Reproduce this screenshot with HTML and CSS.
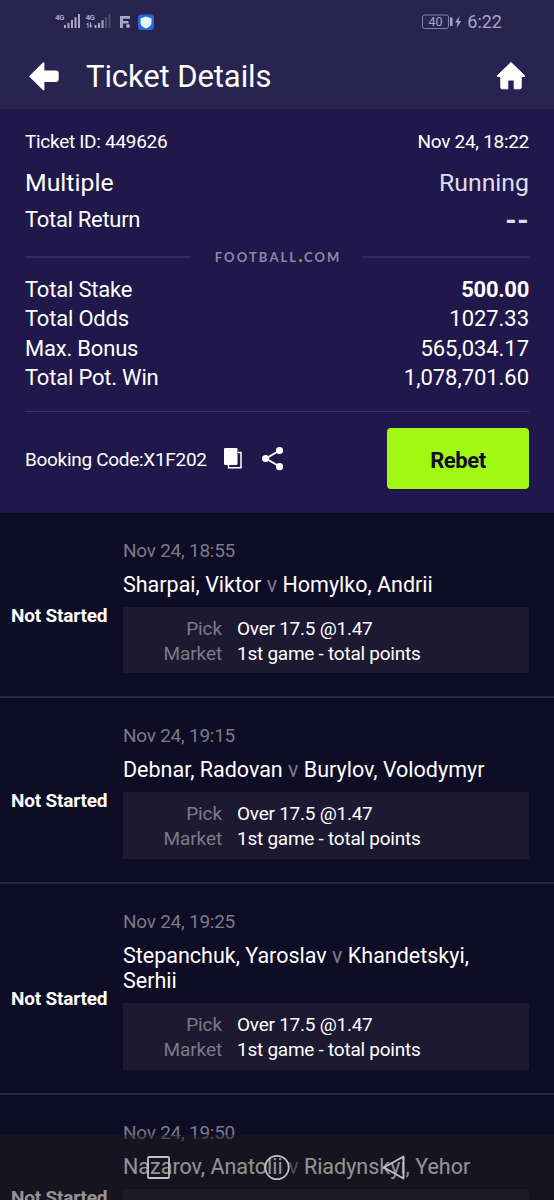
FILE: index.html
```
<!DOCTYPE html>
<html lang="en">
<head>
<meta charset="utf-8">
<title>Ticket Details</title>
<link rel="stylesheet" href="styles.css">
</head>
<body>
<div class="screen">
  <header class="header">
    <div class="status-bar">
      <svg class="status-icons" width="102" height="20" viewBox="0 0 102 20">
        <g fill="#a9a5c4">
          <rect x="9" y="14" width="2" height="3"/><rect x="12.500" y="12" width="2" height="5"/><rect x="16" y="9" width="2" height="8"/><rect x="19.500" y="6" width="2" height="11"/><rect x="23" y="3" width="2" height="14"/>
          <rect x="39.500" y="14" width="2" height="3"/><rect x="43" y="12" width="2" height="5"/><rect x="46.500" y="9" width="2" height="8"/>
          <g opacity=".3"><rect x="50" y="6" width="2" height="11"/><rect x="53.500" y="3" width="2" height="14"/></g>
          <path d="M32.500 17v-3.500h-1.500l2.500-2.500V17zM35 11.500v3h-1l1.700 2.500 1.800-2.500h-1.300v-3z"/>
          <path d="M65 5h10v2.800h-7V10h5.500v2.600H68V17h-3z"/><circle cx="73" cy="15" r="2"/>
          <text x="0" y="8.500" class="network">4G</text><text x="30.500" y="8.500" class="network">4G</text>
        </g>
        <rect x="83" y="3.500" width="16" height="15.500" rx="3.500" fill="#2568df"/>
        <path d="M91 5.500l5.500 2v4c0 3-2.500 4.800-5.500 6-3-1.200-5.500-3-5.500-6v-4z" fill="#e9f6fb"/>
      </svg>
      <div class="status-right">
        <svg width="42" height="18" viewBox="0 0 42 18">
          <rect x="1.500" y="2" width="26" height="13.500" rx="2" fill="none" stroke="#8783a6"/>
          <rect x="29" y="4.500" width="2.500" height="8.500" fill="#a9a5c4"/>
          <path d="M38.500 3l-4.500 6.500h2.600l-1 5.500 4.600-7h-2.700z" fill="#a9a5c4"/>
          <text x="14.500" y="13" text-anchor="middle" class="battery">40</text>
        </svg>
        <span class="clock">6:22</span>
      </div>
    </div>
    <div class="title-bar">
      <svg class="back" width="32" height="32" viewBox="0 0 32 32"><path d="M2.300 16.300L15.500 3.200v8.300h12.500a1.800 1.800 0 0 1 1.800 1.800v6a1.800 1.800 0 0 1-1.800 1.800H15.500v8.300z" fill="#fff" stroke="#fff" stroke-width="1.800" stroke-linejoin="round"/></svg>
      <h1 class="title">Ticket Details</h1>
      <svg class="home" width="30" height="30" viewBox="0 0 30 30"><path d="M15 1.500L1.500 14.500v1h3.300v11a1.300 1.300 0 0 0 1.300 1.300h5.700V20a1 1 0 0 1 1-1h4.400a1 1 0 0 1 1 1v7.800h5.700a1.300 1.300 0 0 0 1.300-1.300v-11h3.300v-1z" fill="#fff" stroke="#fff" stroke-linejoin="round"/></svg>
    </div>
  </header>

  <section class="summary">
    <div class="line line-id"><span>Ticket ID: 449626</span><span>Nov 24, 18:22</span></div>
    <div class="line line-type"><span>Multiple</span><span class="running">Running</span></div>
    <div class="line line-return"><span>Total Return</span><span class="dashes">--</span></div>
    <div class="brand"><span class="brand-name">FOOTBALL<span class="dot">.</span>COM</span></div>
    <div class="totals">
      <div class="line"><span>Total Stake</span><span class="stake">500.00</span></div>
      <div class="line"><span>Total Odds</span><span class="value">1027.33</span></div>
      <div class="line"><span>Max. Bonus</span><span class="value">565,034.17</span></div>
      <div class="line"><span>Total Pot. Win</span><span class="value">1,078,701.60</span></div>
    </div>
    <div class="booking">
      <span class="code">Booking Code:X1F202</span>
      <svg class="copy" width="20" height="24" viewBox="0 0 20 24"><path d="M5.500 18v2.800h12.500V5.500h-3" fill="none" stroke="#fff" stroke-width="1.500"/><rect x="1" y="1" width="13.500" height="17" rx="1.300" fill="#fff"/></svg>
      <svg class="share" width="24" height="26" viewBox="0 0 24 26"><path d="M18.500 4.500L5 12.500l13.500 8" fill="none" stroke="#fff" stroke-width="2"/><g fill="#fff"><circle cx="18.500" cy="4.500" r="3.600"/><circle cx="4.600" cy="12.500" r="3.600"/><circle cx="18.500" cy="20.700" r="3.600"/></g></svg>
      <button class="rebet">Rebet</button>
    </div>
  </section>

  <main class="games">
    <article class="game">
      <div class="state">Not Started</div>
      <div class="details">
        <div class="date">Nov 24, 18:55</div>
        <div class="players">Sharpai, Viktor <span class="versus">v</span> Homylko, Andrii</div>
        <dl class="bet"><dt>Pick</dt><dd>Over 17.5 @1.47</dd><dt>Market</dt><dd>1st game - total points</dd></dl>
      </div>
    </article>
    <article class="game">
      <div class="state">Not Started</div>
      <div class="details">
        <div class="date">Nov 24, 19:15</div>
        <div class="players">Debnar, Radovan <span class="versus">v</span> Burylov, Volodymyr</div>
        <dl class="bet"><dt>Pick</dt><dd>Over 17.5 @1.47</dd><dt>Market</dt><dd>1st game - total points</dd></dl>
      </div>
    </article>
    <article class="game">
      <div class="state">Not Started</div>
      <div class="details">
        <div class="date">Nov 24, 19:25</div>
        <div class="players">Stepanchuk, Yaroslav <span class="versus">v</span> Khandetskyi, Serhii</div>
        <dl class="bet"><dt>Pick</dt><dd>Over 17.5 @1.47</dd><dt>Market</dt><dd>1st game - total points</dd></dl>
      </div>
    </article>
    <article class="game">
      <div class="state">Not Started</div>
      <div class="details">
        <div class="date">Nov 24, 19:50</div>
        <div class="players">Nazarov, Anatolii <span class="versus">v</span> Riadynskyi, Yehor</div>
        <dl class="bet"></dl>
      </div>
    </article>
  </main>

  <nav class="system-nav">
    <svg width="554" height="65" viewBox="0 0 554 65" fill="none" stroke="#c3c1c6" stroke-width="1.800" stroke-linejoin="round">
      <rect x="148" y="22" width="21" height="21" rx="1"/>
      <circle cx="277" cy="32.500" r="11.700"/>
      <path d="M384 32.500L403.500 21.500v22z"/>
    </svg>
  </nav>
</div>
</body>
</html>
```
FILE: styles.css
```
* { box-sizing: border-box; }
body { margin: 0; background: #0f0c25; color: #fff; font-family: Roboto, "Liberation Sans", sans-serif; }
.screen { position: relative; width: 554px; height: 1200px; overflow: hidden; }
svg { display: block; flex: none; }

.header { height: 109px; background: #28244f; }
.status-bar { display: flex; justify-content: space-between; align-items: center; height: 43px; padding: 0 52px 0 55px; }
.status-icons { margin-top: -2px; }
.network { font-size: 8px; font-weight: 700; letter-spacing: -.5px; }
.status-right { display: flex; align-items: center; gap: 4px; color: #a9a5c4; }
.battery { font-size: 12.500px; fill: #a9a5c4; }
.clock { font-size: 18px; line-height: 20px; }
.title-bar { display: flex; align-items: center; height: 66px; padding: 0 28px; }
.title { flex: 1; margin: 2px 0 0 26px; font-size: 31px; font-weight: 400; line-height: 36px; letter-spacing: -.1px; }

.summary { height: 404px; padding: 20px 25px 0; background: #20184a; }
.line { display: flex; justify-content: space-between; align-items: center; height: 29.300px; font-size: 22px; letter-spacing: -.2px; }
.line-id { height: 25px; font-size: 19px; letter-spacing: -.3px; }
.line-type { height: 57px; font-size: 24.800px; letter-spacing: 0; }
.running { color: #dedcec; }
.line-return { height: 17px; letter-spacing: -.3px; }
.dashes { font-weight: 700; font-size: 29px; letter-spacing: .4px; color: #dedcec; }
.brand { display: flex; align-items: center; gap: 24px; height: 18px; margin-top: 20px; }
.brand::before, .brand::after { content: ""; flex: 1; height: 2px; background: #30295a; }
.brand-name { font: 700 13px/18px Lato, sans-serif; letter-spacing: 2.100px; margin-right: -2.100px; color: #8d88a8; }
.dot { color: #7fae2e; font-size: 18px; font-weight: 900; line-height: 0; letter-spacing: 1.400px; }
.totals { padding: 9px 0 19px; border-bottom: 1px solid #3a3366; }
.stake { font-weight: 700; letter-spacing: -.3px; }
.value { letter-spacing: -.05px; }
.booking { display: flex; align-items: center; margin-top: 16px; height: 61px; }
.code { padding-top: 1px; font-size: 19px; letter-spacing: -.3px; }
.copy { margin-left: 16px; }
.share { margin-left: 18px; }
.rebet { width: 142px; height: 61px; margin-left: auto; padding: 3px 0 0; border: 0; border-radius: 4px; background: #a0f814; color: #0f0c25; font: 700 22px Roboto, sans-serif; letter-spacing: -.4px; }

.game { display: grid; grid-template-columns: 123px 1fr; padding: 25px 25px 23.200px 0; border-bottom: 2px solid #29264b; }
.state { align-self: center; padding: 20px 0 0 11px; font-size: 19px; font-weight: 700; line-height: 24px; letter-spacing: -.2px; white-space: nowrap; }
.date { font-size: 19px; line-height: 25px; letter-spacing: -.25px; color: #7c7a87; }
.players { margin: 9px 0 9.500px; padding-right: 8px; font-size: 21.500px; line-height: 25.500px; }
.versus { color: #7c7a87; }
.bet { display: grid; grid-template-columns: 99px 1fr; grid-auto-rows: 25.300px; column-gap: 15px; height: 66.300px; margin: 0; padding-top: 8.500px; background: #1c1930; font-size: 19px; line-height: 26px; letter-spacing: -.25px; }
.bet dt { text-align: right; letter-spacing: -.1px; color: #7c7a87; }
.bet dd { margin: 0; }

.system-nav { position: absolute; left: 0; bottom: 0; background: rgba(32, 30, 27, .48); }
```
